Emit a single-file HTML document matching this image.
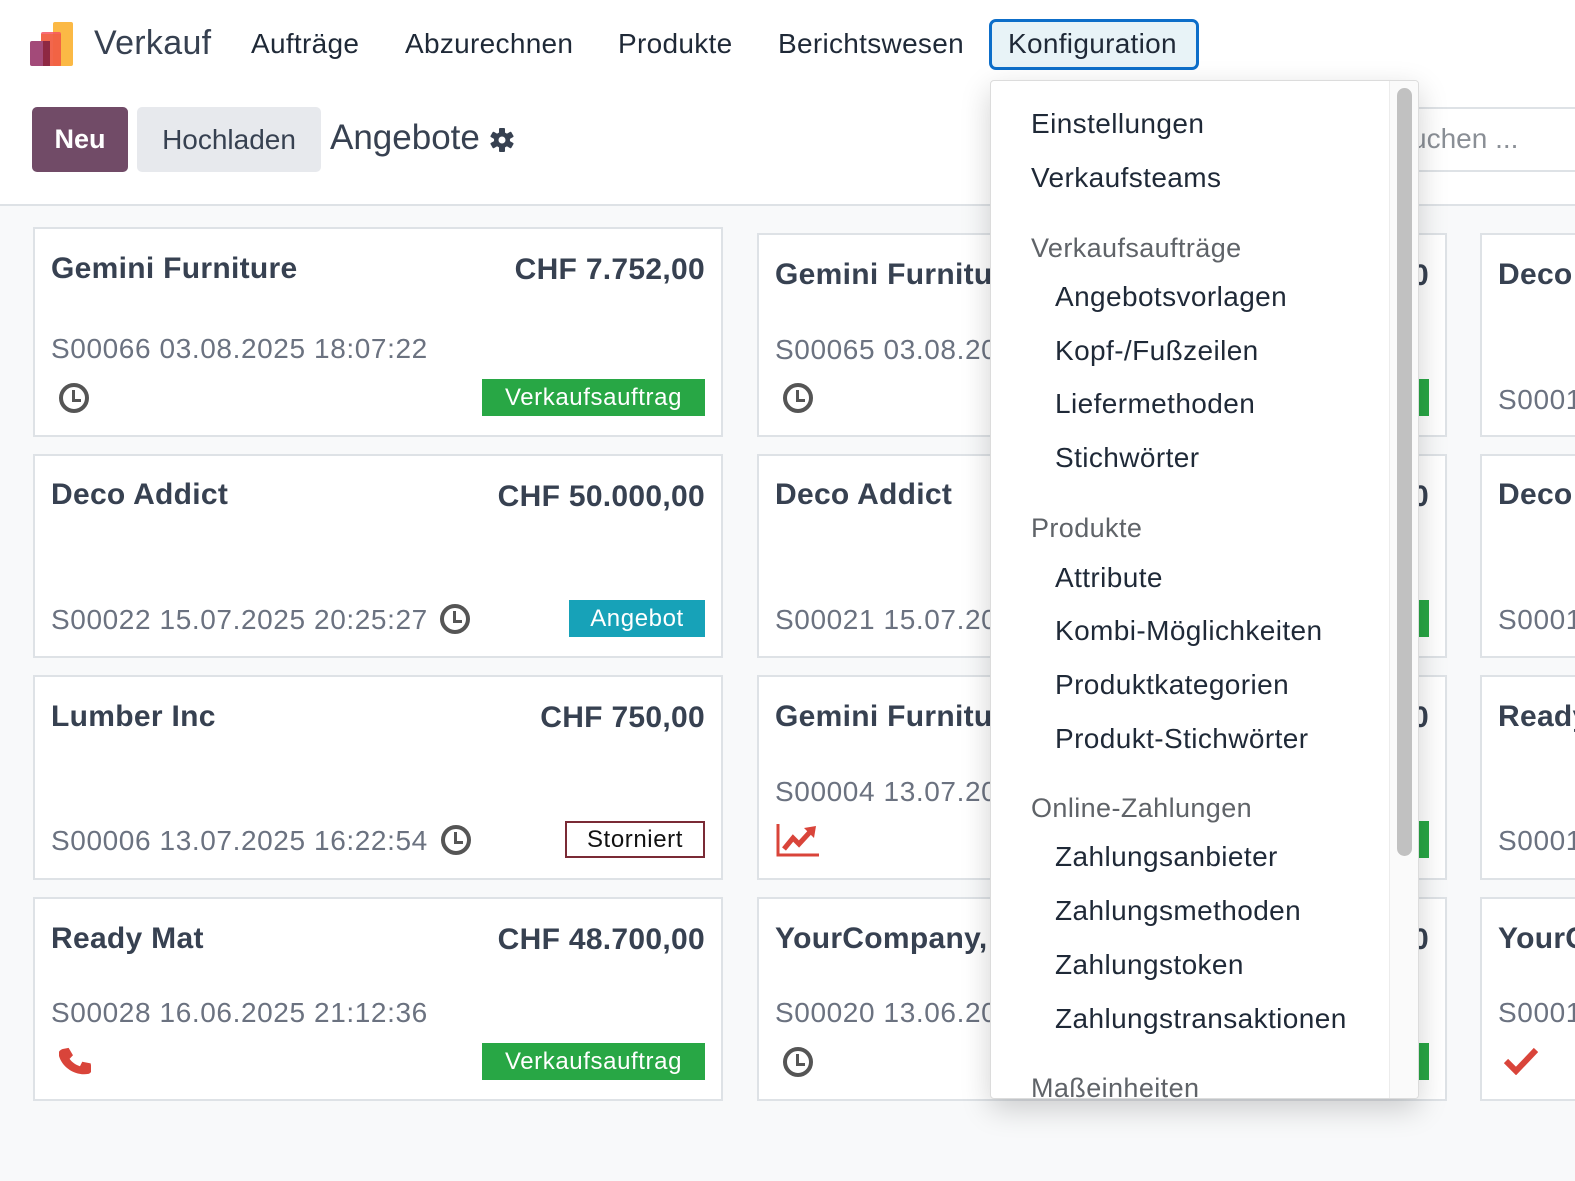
<!DOCTYPE html>
<html><head><meta charset="utf-8"><style>
*{box-sizing:border-box;margin:0;padding:0}
html,body{width:1575px;height:1181px;overflow:hidden}
body{background:#f8f9fa;font-family:"Liberation Sans",sans-serif;color:#374151;position:relative}
.a{position:absolute;white-space:nowrap}
.hdr{position:absolute;left:0;top:0;width:1575px;height:206px;background:#fff;border-bottom:2px solid #dee2e6}
.nav{font-size:28px;color:#1f2937;top:28px;letter-spacing:.3px}
.card{position:absolute;background:#fff;border:2px solid #dee2e6;overflow:hidden}
.t{font-size:30px;font-weight:bold;color:#374151;letter-spacing:.3px}
.r{font-size:28px;color:#6b7280;letter-spacing:.6px}
.b{font-size:24px;color:#fff;text-align:center;line-height:37px;height:37px;letter-spacing:.6px}
.g{background:#28a745}
.clk{width:30px;height:30px;border:4px solid #555;border-radius:50%}
.clk:after{content:"";position:absolute;left:9px;top:3px;height:9px;border-left:3px solid #555;border-bottom:3px solid #555;width:6px}
.dd{position:absolute;left:990px;top:80px;width:429px;height:1019px;background:#fff;border:1px solid #dcdcdc;border-radius:4px;box-shadow:0 10px 30px rgba(0,0,0,.18);overflow:hidden}
.di{position:absolute;left:64px;font-size:28px;color:#1f2937;white-space:nowrap;letter-spacing:.4px}
.dh{position:absolute;left:40px;font-size:27px;color:#5f6368;white-space:nowrap;letter-spacing:.4px}
</style></head><body>
<div class="hdr"></div>
<svg class="a" style="left:29px;top:22px" width="46" height="46" viewBox="0 0 46 46"><rect x="24" y="0" width="20" height="44" rx="2" fill="#fbb945"/><rect x="12" y="10" width="20" height="34" rx="2" fill="#f6525f" opacity=".85"/><rect x="12" y="12" width="20" height="32" fill="#f0643a" opacity=".7"/><rect x="1" y="19" width="20" height="25" rx="2" fill="#a34a79"/><rect x="14" y="19" width="7" height="25" fill="#8e2843"/></svg>
<div class="a nav" style="left:94px;font-size:34px;top:24px;color:#374151">Verkauf</div>
<div class="a nav" style="left:251px">Aufträge</div>
<div class="a nav" style="left:405px">Abzurechnen</div>
<div class="a nav" style="left:618px">Produkte</div>
<div class="a nav" style="left:778px">Berichtswesen</div>
<div class="a" style="left:989px;top:19px;width:210px;height:51px;border:3px solid #0d6ec9;border-radius:7px;background:#e8f3f7"></div>
<div class="a nav" style="left:1008px">Konfiguration</div>
<div class="a" style="left:32px;top:107px;width:96px;height:65px;background:#714b67;border-radius:5px;color:#fff;font-size:27px;font-weight:bold;text-align:center;line-height:65px">Neu</div>
<div class="a" style="left:137px;top:107px;width:184px;height:65px;background:#e7e9ed;border-radius:5px;color:#374151;font-size:28px;text-align:center;line-height:65px">Hochladen</div>
<div class="a" style="left:330px;top:118px;font-size:35px;color:#374151">Angebote</div>
<svg class="a" style="left:489px;top:127px" width="26" height="26" viewBox="0 0 26 26"><g fill="#374151"><circle cx="13" cy="13" r="8"/><rect x="10" y="1" width="6" height="24" rx="1"/><rect x="10" y="1" width="6" height="24" rx="1" transform="rotate(60 13 13)"/><rect x="10" y="1" width="6" height="24" rx="1" transform="rotate(120 13 13)"/></g><circle cx="13" cy="13" r="3.5" fill="#fff"/></svg>
<div class="a" style="left:1400px;top:107px;width:175px;height:65px;border:2px solid #dee2e6;border-right:none;background:#fff"></div>
<div class="a" style="left:1397px;top:123px;font-size:28px;color:#8a8f96">suchen ...</div>

<!-- col1 -->
<div class="card" style="left:33px;top:227px;width:690px;height:210px">
<div class="a t" style="left:16px;top:23px">Gemini Furniture</div><div class="a t" style="right:16px;top:24px">CHF 7.752,00</div>
<div class="a r" style="left:16px;top:104px">S00066 03.08.2025 18:07:22</div>
<div class="a clk" style="left:24px;top:154px"></div>
<div class="a b g" style="right:16px;top:150px;width:223px">Verkaufsauftrag</div></div>
<div class="card" style="left:33px;top:454px;width:690px;height:204px">
<div class="a t" style="left:16px;top:22px">Deco Addict</div><div class="a t" style="right:16px;top:24px">CHF 50.000,00</div>
<div class="a r" style="left:16px;top:148px">S00022 15.07.2025 20:25:27</div>
<div class="a clk" style="left:405px;top:148px"></div>
<div class="a b" style="right:16px;top:144px;width:136px;background:#17a2b8">Angebot</div></div>
<div class="card" style="left:33px;top:675px;width:690px;height:205px">
<div class="a t" style="left:16px;top:23px">Lumber Inc</div><div class="a t" style="right:16px;top:24px">CHF 750,00</div>
<div class="a r" style="left:16px;top:148px">S00006 13.07.2025 16:22:54</div>
<div class="a clk" style="left:406px;top:148px"></div>
<div class="a b" style="right:16px;top:144px;width:140px;border:2px solid #7a2a35;color:#111;line-height:33px">Storniert</div></div>
<div class="card" style="left:33px;top:897px;width:690px;height:204px">
<div class="a t" style="left:16px;top:23px">Ready Mat</div><div class="a t" style="right:16px;top:24px">CHF 48.700,00</div>
<div class="a r" style="left:16px;top:98px">S00028 16.06.2025 21:12:36</div>
<svg class="a" style="left:24px;top:146px" width="32" height="32" viewBox="0 0 32 32"><path d="M6 2l6 0 3 8-4 3c2 4 5 7 9 9l3-4 8 3 0 6c0 2-2 4-4 4C13 31 1 19 1 6c0-2 3-4 5-4z" fill="#d9443a" transform="rotate(-10 16 16)"/></svg>
<div class="a b g" style="right:16px;top:144px;width:223px">Verkaufsauftrag</div></div>

<!-- col2 -->
<div class="card" style="left:757px;top:233px;width:690px;height:204px">
<div class="a t" style="left:16px;top:23px">Gemini Furniture</div><div class="a t" style="right:16px;top:24px">CHF 7.752,00</div>
<div class="a r" style="left:16px;top:99px">S00065 03.08.2025 18:07:22</div>
<div class="a clk" style="left:24px;top:148px"></div>
<div class="a b g" style="right:16px;top:144px;width:223px">Verkaufsauftrag</div></div>
<div class="card" style="left:757px;top:454px;width:690px;height:204px">
<div class="a t" style="left:16px;top:22px">Deco Addict</div><div class="a t" style="right:16px;top:24px">CHF 50.000,00</div>
<div class="a r" style="left:16px;top:148px">S00021 15.07.2025 20:25:27</div>
<div class="a b g" style="right:16px;top:144px;width:223px">Verkaufsauftrag</div></div>
<div class="card" style="left:757px;top:675px;width:690px;height:205px">
<div class="a t" style="left:16px;top:23px">Gemini Furniture</div><div class="a t" style="right:16px;top:24px">CHF 750,00</div>
<div class="a r" style="left:16px;top:99px">S00004 13.07.2025</div>
<svg class="a" style="left:17px;top:145px" width="44" height="36" viewBox="0 0 44 36"><path d="M2 2V33H43" stroke="#d9443a" stroke-width="3" fill="none"/><path d="M8 27L17 16L23 22L34 10" stroke="#d9443a" stroke-width="5" fill="none"/><path d="M28 6L40 4L38 16Z" fill="#d9443a"/></svg>
<div class="a b g" style="right:16px;top:144px;width:223px">Verkaufsauftrag</div></div>
<div class="card" style="left:757px;top:897px;width:690px;height:204px">
<div class="a t" style="left:16px;top:23px">YourCompany, Joel Willis</div><div class="a t" style="right:16px;top:24px">CHF 0,00</div>
<div class="a r" style="left:16px;top:98px">S00020 13.06.2025</div>
<div class="a clk" style="left:24px;top:148px"></div>
<div class="a b g" style="right:16px;top:144px;width:223px">Verkaufsauftrag</div></div>

<!-- col3 -->
<div class="card" style="left:1480px;top:233px;width:95px;height:204px;border-right:none"><div class="a t" style="left:16px;top:23px">Deco Addict</div><div class="a r" style="left:16px;top:149px">S00012</div></div>
<div class="card" style="left:1480px;top:454px;width:95px;height:204px;border-right:none"><div class="a t" style="left:16px;top:22px">Deco Addict</div><div class="a r" style="left:16px;top:148px">S00013</div></div>
<div class="card" style="left:1480px;top:675px;width:95px;height:205px;border-right:none"><div class="a t" style="left:16px;top:23px">Ready Mat</div><div class="a r" style="left:16px;top:148px">S00014</div></div>
<div class="card" style="left:1480px;top:897px;width:95px;height:204px;border-right:none"><div class="a t" style="left:16px;top:23px">YourCompany</div><div class="a r" style="left:16px;top:98px">S00015</div>
<svg class="a" style="left:22px;top:148px" width="34" height="28" viewBox="0 0 34 28"><path d="M2 14l10 10L32 3" stroke="#d9443a" stroke-width="6" fill="none"/></svg></div>

<!-- dropdown -->
<div class="dd">
<div class="di" style="left:40px;top:27px">Einstellungen</div>
<div class="di" style="left:40px;top:81px">Verkaufsteams</div>
<div class="dh" style="top:152px">Verkaufsaufträge</div>
<div class="di" style="top:200px">Angebotsvorlagen</div>
<div class="di" style="top:254px">Kopf-/Fußzeilen</div>
<div class="di" style="top:307px">Liefermethoden</div>
<div class="di" style="top:361px">Stichwörter</div>
<div class="dh" style="top:432px">Produkte</div>
<div class="di" style="top:481px">Attribute</div>
<div class="di" style="top:534px">Kombi-Möglichkeiten</div>
<div class="di" style="top:588px">Produktkategorien</div>
<div class="di" style="top:642px">Produkt-Stichwörter</div>
<div class="dh" style="top:712px">Online-Zahlungen</div>
<div class="di" style="top:760px">Zahlungsanbieter</div>
<div class="di" style="top:814px">Zahlungsmethoden</div>
<div class="di" style="top:868px">Zahlungstoken</div>
<div class="di" style="top:922px">Zahlungstransaktionen</div>
<div class="dh" style="top:992px">Maßeinheiten</div>
<div style="position:absolute;left:398px;top:0;width:31px;height:1019px;background:#fafafa;border-left:1px solid #ececec"></div>
<div style="position:absolute;left:406px;top:7px;width:15px;height:768px;background:#c1c1c1;border-radius:8px"></div>
</div>
</body></html>
